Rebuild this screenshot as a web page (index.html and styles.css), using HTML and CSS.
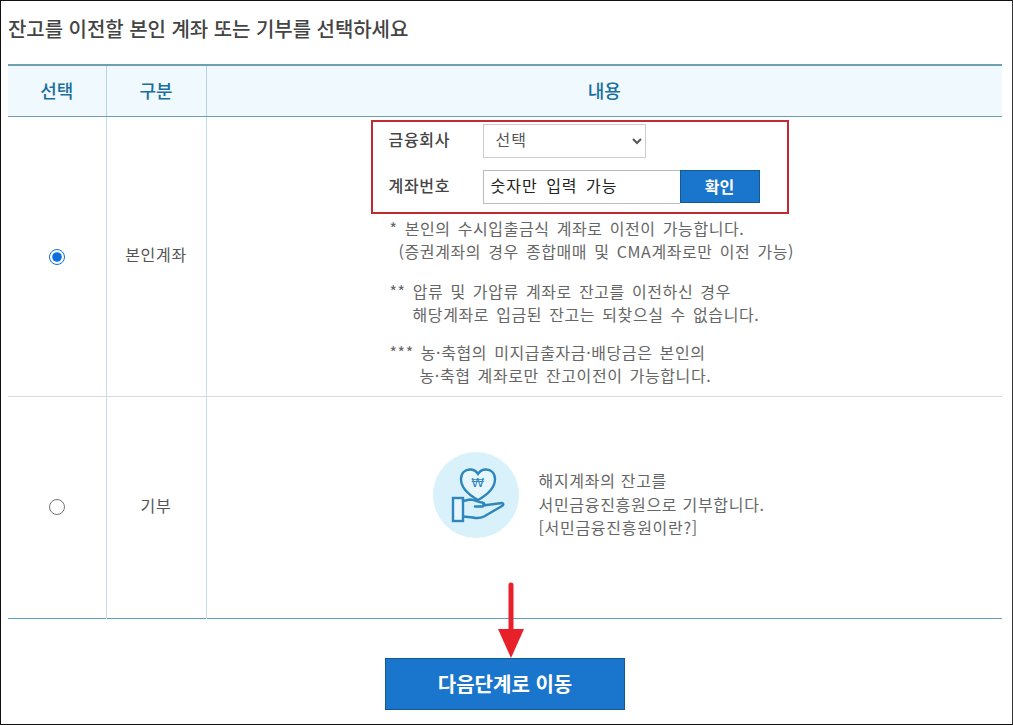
FILE: index.html
```html
<!DOCTYPE html>
<html lang="ko">

<head>
  <meta charset="UTF-8" />
  <meta name="viewport" content="width=device-width, initial-scale=1.0" />
  <title>잔고 이전</title>
  <link rel="stylesheet" href="styles.css">
</head>

<body>
  <div class="page">
    <h2 class="title">잔고를 이전할 본인 계좌 또는 기부를 선택하세요</h2>

    <table class="choice-table">
      <thead>
        <tr>
          <th class="col-select">선택</th>
          <th class="col-type">구분</th>
          <th>내용</th>
        </tr>
      </thead>
      <tbody>
        <tr class="row-account">
          <td><input type="radio" name="target" class="radio" checked></td>
          <td>본인계좌</td>
          <td class="content-cell">
            <!-- Account form -->
            <div class="account-box">
              <div class="form-row">
                <label class="form-label" for="company">금융회사</label>
                <select id="company" class="company-select">
                  <option>선택</option>
                </select>
              </div>
              <div class="form-row">
                <label class="form-label" for="account">계좌번호</label>
                <input id="account" class="account-input" type="text" placeholder="숫자만 입력 가능">
                <button class="confirm-btn">확인</button>
              </div>
            </div>

            <div class="notes">
              <p class="note">* 본인의 수시입출금식 계좌로 이전이 가능합니다.<br><span class="indent-1">(증권계좌의 경우 종합매매 및 CMA계좌로만 이전 가능)</span></p>
              <p class="note">** 압류 및 가압류 계좌로 잔고를 이전하신 경우<br><span class="indent-2">해당계좌로 입금된 잔고는 되찾으실 수 없습니다.</span></p>
              <p class="note">*** 농·축협의 미지급출자금·배당금은 본인의<br><span class="indent-3">농·축협 계좌로만 잔고이전이 가능합니다.</span></p>
            </div>
          </td>
        </tr>
        <tr class="row-donate">
          <td><input type="radio" name="target" class="radio"></td>
          <td>기부</td>
          <td>
            <div class="donate">
              <svg class="donate-icon" viewBox="0 0 86 86" aria-hidden="true">
                <circle cx="43" cy="43" r="43" fill="#d9f1fb" />
                <path d="M45 48 C36 43 28 36 28 27 C28 21 32 17.500 37 17.500 C41 17.500 43.500 19.500 45 22 C46.500 19.500 49 17.500 53 17.500 C58 17.500 62 21 62 27 C62 36 54 43 45 48 Z" fill="#e6f6fc" stroke="#2f86bd" stroke-width="2.400" />
                <text x="45" y="35" class="won">₩</text>
                <rect x="20" y="46" width="10" height="23" fill="#e6f6fc" stroke="#2f86bd" stroke-width="2.400" />
                <path d="M30 49 L37 47.500 C41 47.500 45 50 49 50.500 C52 51 52.500 54.500 49 54.500 L42 54.500 M50 53.500 L69 51 C71 51.500 70.500 53.500 69 54 L51 64.500 C47 66.500 44 66.500 40 65.500 L30 64.500" fill="none" stroke="#2f86bd" stroke-width="2.400" stroke-linejoin="round" stroke-linecap="round" />
              </svg>
              <p class="donate-text">해지계좌의 잔고를<br>서민금융진흥원으로 기부합니다.<br>[서민금융진흥원이란?]</p>
            </div>
          </td>
        </tr>
      </tbody>
    </table>

    <div class="actions">
      <button class="next-btn">다음단계로 이동</button>
    </div>

    <!-- Red arrow drawn over the table and the button -->
    <svg class="arrow" width="30" height="78" viewBox="0 0 30 78" aria-hidden="true">
      <path d="M15 3 V50" stroke="#e8202a" stroke-width="5" stroke-linecap="round" fill="none" />
      <path d="M2 47 H28 L15 76 Z" fill="#e8202a" />
    </svg>
  </div>
</body>

</html>
```

FILE: styles.css
```css
/* General body styles */
body {
  margin: 0;
  background-color: #ffffff;
  color: #555;
  font-family: "Noto Sans CJK KR", "Noto Sans", sans-serif;
  font-size: 16px;
}

.page {
  position: relative;
  box-sizing: border-box;
  width: 1013px;
  height: 725px;
  padding: 0 10px 0 7px;
  border: 1px solid #111;
  border-right-color: #333;
  overflow: hidden;
}

.title {
  margin: 0;
  height: 63px;
  line-height: 56px;
  font-size: 20px;
  font-weight: 500;
  color: #444;
  letter-spacing: -0.05px;
}

/* Table */
.choice-table {
  width: 994px;
  border-collapse: collapse;
  table-layout: fixed;
  border-bottom: 1px solid #5f9fb8;
}

.choice-table th {
  box-sizing: border-box;
  height: 51px;
  padding: 0 0 2px;
  background-color: #eff9fe;
  color: #1a6f9c;
  font-size: 18px;
  font-weight: 500;
  border-top: 2px solid #6e9fb3;
  border-bottom: 1px solid #6e9fb3;
  border-right: 1px solid #b5d3de;
}

.choice-table th:last-child {
  border-right: 0;
}

.col-select {
  width: 98px;
}

.col-type {
  width: 100px;
}

.choice-table td {
  box-sizing: border-box;
  padding: 0 0 4px;
  text-align: center;
  letter-spacing: 0.7px;
  border-right: 1px solid #c4dde6;
  border-bottom: 1px solid #d9d9d9;
  color: #555;
}

.choice-table td:last-child {
  border-right: 0;
}

.row-account td {
  height: 280px;
}

.row-donate td {
  height: 222px;
  padding-bottom: 5px;
  border-bottom: 0;
}

.choice-table .content-cell {
  vertical-align: top;
  text-align: left;
}

.radio {
  width: 16px;
  height: 16px;
  margin: 0;
  accent-color: #0b6fe0;
  vertical-align: middle;
}

/* Account form */
.account-box {
  box-sizing: border-box;
  width: 418px;
  height: 94px;
  margin: 3px 0 0 164px;
  padding: 2px 27px 0 16px;
  border: 2px solid #c22a32;
}

.form-row {
  display: flex;
  align-items: center;
  height: 34px;
  margin-bottom: 12px;
}

.form-row:last-child {
  margin-bottom: 0;
}

.form-label {
  width: 94px;
  padding-bottom: 4px;
  font-size: 16px;
  font-weight: 500;
  color: #444;
}

.company-select {
  box-sizing: border-box;
  width: 163px;
  height: 34px;
  padding: 0 0 3px 8px;
  border: 1px solid #ccc;
  background-color: #fff;
  color: #555;
  font-family: inherit;
  font-size: 16px;
  letter-spacing: 1px;
}

.account-input {
  box-sizing: border-box;
  width: 197px;
  height: 34px;
  padding: 0 7px 3px;
  border: 1px solid #bbb;
  border-right: 0;
  font-family: inherit;
  font-size: 16px;
  letter-spacing: 1px;
  word-spacing: 3px;
}

.account-input::placeholder {
  color: #222;
  opacity: 1;
}

.confirm-btn {
  width: 80px;
  height: 33px;
  padding: 0 0 2px;
  border: 1px solid #14598f;
  background-color: #1a75cc;
  color: #fff;
  font-family: inherit;
  font-size: 16px;
  font-weight: 700;
}

/* Notes */
.notes {
  margin: 3px 0 0 183px;
  line-height: 23.500px;
  color: #666;
  letter-spacing: 0.6px;
  word-spacing: 2px;
}

.note {
  margin: 0 0 14px;
}

.note:first-child {
  margin-bottom: 16px;
}

.note:last-child {
  margin-bottom: 0;
}

.indent-1 {
  margin-left: 9px;
}

.indent-2 {
  margin-left: 23px;
}

.indent-3 {
  margin-left: 30px;
}

/* Donate */
.donate {
  display: flex;
  align-items: center;
  margin-left: 226px;
  text-align: left;
}

.donate-icon {
  width: 86px;
  height: 86px;
  margin: 0 20px 20px 0;
  flex-shrink: 0;
}

.won {
  font-family: "DejaVu Sans", sans-serif;
  font-size: 13px;
  fill: #2f86bd;
  text-anchor: middle;
}

.donate-text {
  margin: 0;
  line-height: 23.500px;
  color: #666;
}

/* Bottom button */
.actions {
  display: flex;
  justify-content: center;
  padding-top: 39px;
}

.next-btn {
  width: 240px;
  height: 52px;
  border: 1px solid #14598f;
  background-color: #1a75cc;
  color: #fff;
  font-family: inherit;
  font-size: 20px;
  font-weight: 700;
}

.arrow {
  position: absolute;
  left: 495px;
  top: 581px;
}
```
